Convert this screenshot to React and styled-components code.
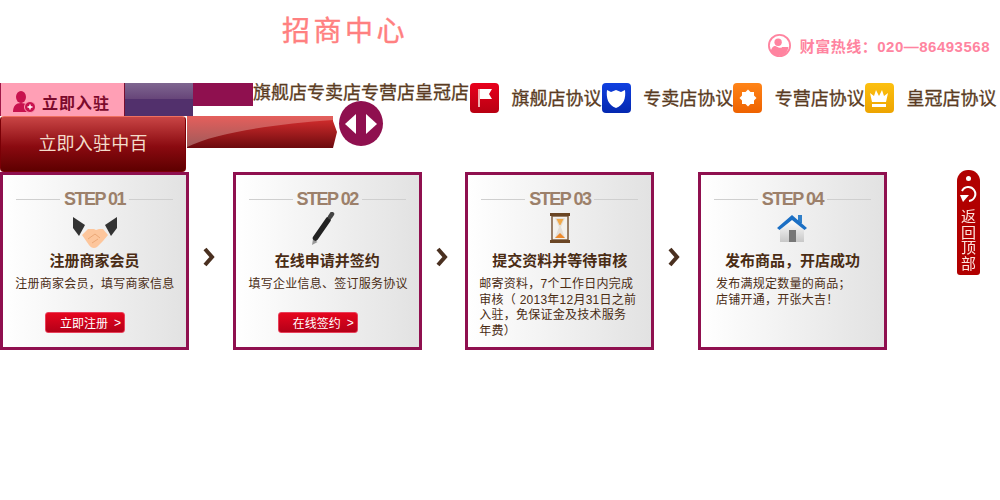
import React from "react";
import styled, { createGlobalStyle } from "styled-components";

const Global = createGlobalStyle`
  html, body { margin: 0; padding: 0; background: #fff; }
  body { font-family: "Liberation Sans", "Noto Sans CJK SC", sans-serif; }
`;

const Page = styled.div`
  width: 1000px;
  height: 500px;
  overflow: hidden;
`;

// header
const Header = styled.header`
  display: flex;
  height: 83px;
`;
const Title = styled.h1`
  margin: 12px 0 0 282px;
  font-size: 28px;
  line-height: 40px;
  height: 40px;
  font-weight: 400;
  letter-spacing: 3.5px;
  -webkit-text-stroke: 0.4px #ff8080;
  color: #ff8080;
`;
const Hotline = styled.div`
  display: flex;
  align-items: center;
  gap: 9px;
  height: 26px;
  margin: 32px 10px 0 auto;
  font-size: 15px;
  font-weight: 700;
  letter-spacing: 0.5px;
  color: #ff84a0;
`;

// tab row
const TabRow = styled.nav`
  display: flex;
  height: 33px;
`;
const JoinTab = styled.div`
  box-sizing: border-box;
  width: 125px;
  height: 33px;
  display: flex;
  align-items: center;
  gap: 7px;
  padding: 5px 0 0 12px;
  background: #ff9fb5;
  border-left: 1px solid #a01848;
  border-right: 1px solid #7a1030;
  font-size: 16px;
  font-weight: 700;
  letter-spacing: 1px;
  color: #7c0a2c;
`;
const PurpleTab = styled.div`
  width: 68px;
  height: 33px;
  background: linear-gradient(#7f6690 0, #664478 50%, #52306c 50%, #52306c 100%);
`;
const MagentaTab = styled.div`
  width: 60px;
  height: 23px;
  background: #8f104f;
`;
const TabNames = styled.div`
  width: 217px;
  font-size: 18px;
  line-height: 20px;
  white-space: nowrap;
  -webkit-text-stroke: 0.3px #5a3b22;
  color: #5a3b22;
`;
const Agreement = styled.a`
  width: 131.67px;
  display: flex;
  font-size: 18px;
  line-height: 30px;
  white-space: nowrap;
  -webkit-text-stroke: 0.3px #5a3b22;
  color: #5a3b22;
`;
const AgreementLabel = styled.span`
  margin: 1px 0 0 12.500px;
`;
const Badge = styled.span`
  box-sizing: border-box;
  width: 29px;
  height: 30px;
  flex: none;
  display: flex;
  align-items: center;
  justify-content: center;
  border-radius: 4px;
  background: ${(props) => props.$bg};
`;

// join row
const JoinRow = styled.div`
  display: flex;
  height: 56px;
`;
const JoinButton = styled.button`
  box-sizing: border-box;
  width: 186px;
  height: 56px;
  padding: 0 0 4px;
  border: 1px solid #7a0006;
  border-top-color: #f07060;
  border-radius: 4px;
  background: linear-gradient(#c94545, #8a0a10 55%, #5e0000);
  font-family: inherit;
  font-size: 18px;
  letter-spacing: 0.2px;
  color: #f3dccb;
`;
const RibbonArt = styled.svg`
  display: block;
  margin-left: 1px;
  flex: none;
`;
const Round = styled.div`
  width: 44px;
  height: 45px;
  margin: -15px 0 0 1px;
  flex: none;
  border-radius: 50%;
  background: #8f104f;
  display: flex;
  align-items: center;
  justify-content: center;
  gap: 10px;
`;
const Tri = styled.span`
  width: 0;
  height: 0;
  border-top: 10px solid transparent;
  border-bottom: 10px solid transparent;
  border-${(props) => (props.$left ? "right" : "left")}: 11px solid #fff;
`;

// steps
const Steps = styled.section`
  display: grid;
  grid-template-columns: repeat(4, 232.67px);
`;
const StepCell = styled.div`
  display: flex;
  align-items: center;
`;
const Card = styled.article`
  box-sizing: border-box;
  width: 189px;
  height: 178px;
  flex: none;
  display: flex;
  flex-direction: column;
  padding: 14px 13px 0;
  border: 3px solid #8f104f;
  background: linear-gradient(90deg, #fff, #e2e2e2);
  color: #4a2c14;
`;
const StepHead = styled.div`
  display: flex;
  flex: none;
  align-items: center;
  gap: 4px;
  height: 20px;
  font-size: 18px;
  font-weight: 700;
  letter-spacing: -1.5px;
  color: #9c806a;
  white-space: nowrap;
  &::before, &::after {
    content: "";
    flex: 1;
    height: 1px;
    margin-top: 1px;
    background: #cfcfcf;
  }
`;
const IconSlot = styled.div`
  box-sizing: border-box;
  flex: none;
  height: 42px;
  padding: ${(props) => props.$top}px ${(props) => props.$shift || 0}px 0 0;
  display: flex;
  justify-content: center;
`;
const StepTitle = styled.h3`
  flex: none;
  margin: 0;
  font-size: 15px;
  line-height: 20px;
  text-align: center;
  white-space: nowrap;
`;
const StepText = styled.p`
  flex: none;
  margin: 6px -4px 0 ${(props) => props.$indent}px;
  font-size: 12px;
  line-height: 15.5px;
  letter-spacing: 0.25px;
  white-space: nowrap;
  text-align: ${(props) => (props.$center ? "center" : "left")};
`;
const StepLink = styled.a`
  box-sizing: border-box;
  flex: none;
  width: 80px;
  height: 21px;
  margin: auto 0 14px 29px;
  padding-left: 14px;
  display: flex;
  align-items: center;
  gap: 6px;
  border: 1px solid #e8405a;
  border-radius: 3px;
  background: linear-gradient(#e6061e, #b40018);
  font-size: 12px;
  color: #fff;
`;
const NextArrow = styled.svg`
  margin: 0 0 8px 13px;
  flex: none;
`;

// back to top floats over the page
const BackTop = styled.a`
  position: fixed;
  left: 957px;
  top: 170px;
  width: 23px;
  height: 105px;
  box-sizing: border-box;
  padding-top: 6px;
  border-radius: 11px 11px 3px 3px;
  background: #b10000;
  display: flex;
  flex-direction: column;
  align-items: center;
  font-size: 15px;
  line-height: 15.7px;
  color: #fde3dc;
  text-align: center;
`;
const BackDot = styled.span`
  width: 5px;
  height: 5px;
  flex: none;
  border-radius: 50%;
  background: #fff;
`;
const BackIconWrap = styled.svg`
  margin: 4px 0 6px;
  flex: none;
`;

const PersonAdd = () => (
  <svg width="22" height="22" viewBox="0 0 22 22">
    <ellipse cx="8" cy="6" rx="5" ry="6" fill="#c8124e" />
    <path d="M0 21c0-6 3-9 8-9s8 3 8 9z" fill="#c8124e" />
    <circle cx="17" cy="16" r="5.5" fill="#c8124e" stroke="#ff9fb5" strokeWidth="1" />
    <path d="M14.5 16h5M17 13.5v5" stroke="#fff" strokeWidth="1.4" />
  </svg>
);

const HotlineIcon = () => (
  <svg width="23" height="25" viewBox="0 0 25 25">
    <circle cx="12.5" cy="12.5" r="11.5" fill="#fff" stroke="#ff84a0" strokeWidth="2" />
    <circle cx="11" cy="9" r="4" fill="#ff84a0" />
    <path d="M3 20c0-5 3-7 5-7l4 2 3 0 0-1 7 0c0 5-4 9-9.500 9.500-4 0-7-1-9.500-3.500z" fill="#ff84a0" />
  </svg>
);

const FlagIcon = () => (
  <svg width="20" height="22" viewBox="0 0 20 22">
    <path d="M4 2v18" stroke="#f0b0b0" strokeWidth="2" />
    <path d="M5 2h12l-3 5 3 5H5z" fill="#fff" />
  </svg>
);
const ShieldIcon = () => (
  <svg width="22" height="22" viewBox="0 0 22 22">
    <path d="M2 3l4 2 5-2 5 2 4-2c1 8-1 15-9 18C3 18 1 11 2 3z" fill="#fff" />
  </svg>
);
const GearIcon = () => (
  <svg width="22" height="22" viewBox="0 0 22 22">
    <rect x="5" y="5" width="12" height="12" fill="#fff" />
    <rect x="5" y="5" width="12" height="12" fill="#fff" transform="rotate(45 11 11)" />
  </svg>
);
const CrownIcon = () => (
  <svg width="20" height="22" viewBox="0 0 20 22">
    <path d="M3 15L1 6l4 3 2-6 3 6 3-6 2 6 4-3-2 9z" fill="#fff" />
    <rect x="3" y="17" width="14" height="3" fill="#fff" />
  </svg>
);

const Ribbon = () => (
  <RibbonArt width="151" height="32" viewBox="0 0 151 32">
    <defs>
      <linearGradient id="ribLight" x1="0" y1="0" x2="0" y2="1">
        <stop offset="0" stopColor="#e55f5c" />
        <stop offset="1" stopColor="#a05a5a" />
      </linearGradient>
      <linearGradient id="ribDark" x1="0" y1="0" x2="0" y2="1">
        <stop offset="0" stopColor="#dc3030" />
        <stop offset="1" stopColor="#6c0a0e" />
      </linearGradient>
    </defs>
    <path d="M0 0h146v5l4 11-4 16H0z" fill="url(#ribDark)" />
    <path d="M0 0h146v4C90 8 30 16 0 31z" fill="url(#ribLight)" />
  </RibbonArt>
);

const Handshake = () => (
  <svg width="44" height="32" viewBox="0 0 44 32">
    <path d="M0 0l12 8-6 11-6-8z" fill="#333" />
    <path d="M44 0L32 8l6 11 6-8z" fill="#333" />
    <path d="M9 18l6-6h6l2 1 3-1h4l5 6-5 6-6 6c-3 2-6 1-8-2z" fill="#fdc69c" />
    <path d="M15 22l7-5 5 4M19 26l6-4" stroke="#eba877" strokeWidth="1" fill="none" />
  </svg>
);
const Pen = () => (
  <svg width="24" height="34" viewBox="0 0 24 34">
    <path d="M1 33l1-6 4.500 3z" fill="#999" />
    <path d="M4.500 26L17 8" stroke="#222" strokeWidth="5.500" strokeLinecap="round" />
    <path d="M19 5l2-3" stroke="#444" strokeWidth="4.500" strokeLinecap="round" />
  </svg>
);
const Hourglass = () => (
  <svg width="20" height="30" viewBox="0 0 20 30">
    <rect x="2" y="3" width="16" height="24" fill="#f4f1ec" stroke="#7b5a3c" strokeWidth="1.500" />
    <rect x="0" y="0" width="20" height="3" fill="#6a4524" />
    <rect x="0" y="27" width="20" height="3" fill="#6a4524" />
    <path d="M5 5h10l-4 9 4 11H5l4-11z" fill="#e4ded6" />
    <path d="M6.500 6h7l-3 6h-1z" fill="#f2a948" />
    <path d="M5 25l5-5 5 5z" fill="#ee8a2c" />
  </svg>
);
const House = () => (
  <svg width="30" height="27" viewBox="0 0 30 27">
    <defs>
      <linearGradient id="wall" x1="0" y1="0" x2="0" y2="1">
        <stop offset="0" stopColor="#fff" />
        <stop offset="1" stopColor="#c8c8c8" />
      </linearGradient>
    </defs>
    <path d="M3 15L15 5l12 10v12H3z" fill="url(#wall)" />
    <rect x="12" y="15" width="7" height="12" fill="#777" />
    <path d="M21 0h4v8h-4z" fill="#2f7fc9" />
    <path d="M0 13L15 0l15 13-2.500 2L15 5 2.500 15z" fill="#1b6fc4" />
  </svg>
);

const BackIcon = () => (
  <BackIconWrap width="17" height="18" viewBox="0 0 17 18">
    <path d="M2 6A7 7 0 1 1 9 16" fill="none" stroke="#fff" strokeWidth="2" />
    <path d="M0 10h9l-6 7z" fill="#fff" />
  </BackIconWrap>
);

const agreements = [
  { label: "旗舰店协议", bg: "linear-gradient(#e8001c, #b80012)", icon: <FlagIcon /> },
  { label: "专卖店协议", bg: "linear-gradient(#1040e0, #0428b0)", icon: <ShieldIcon /> },
  { label: "专营店协议", bg: "linear-gradient(#ff8418, #ee6200)", icon: <GearIcon /> },
  { label: "皇冠店协议", bg: "linear-gradient(#fcc010, #eda400)", icon: <CrownIcon /> },
];

const steps = [
  {
    no: "01",
    icon: <Handshake />,
    iconTop: 8,
    title: "注册商家会员",
    lines: ["注册商家会员，填写商家信息"],
    center: true,
    indent: -3,
    link: "立即注册",
  },
  {
    no: "02",
    icon: <Pen />,
    iconTop: 3,
    iconShift: 8,
    title: "在线申请并签约",
    lines: ["填写企业信息、签订服务协议"],
    center: true,
    indent: -2,
    link: "在线签约",
  },
  {
    no: "03",
    icon: <Hourglass />,
    iconTop: 4,
    title: "提交资料并等待审核",
    lines: ["邮寄资料，7个工作日内完成", "审核（ 2013年12月31日之前", "入驻，免保证金及技术服务", "年费）"],
    indent: -2,
  },
  {
    no: "04",
    icon: <House />,
    iconTop: 6,
    title: "发布商品，开店成功",
    lines: ["发布满规定数量的商品；", "店铺开通，开张大吉！"],
    indent: 2,
  },
];

function App() {
  return (
    <Page>
      <Global />
      <Header>
        <Title>招商中心</Title>
        <Hotline>
          <HotlineIcon />
          财富热线：020—86493568
        </Hotline>
      </Header>

      <TabRow>
        <JoinTab>
          <PersonAdd />
          立即入驻
        </JoinTab>
        <PurpleTab />
        <MagentaTab />
        <TabNames>旗舰店专卖店专营店皇冠店</TabNames>
        {agreements.map((item) => (
          <Agreement key={item.label}>
            <Badge $bg={item.bg}>{item.icon}</Badge>
            <AgreementLabel>{item.label}</AgreementLabel>
          </Agreement>
        ))}
      </TabRow>

      <JoinRow>
        <JoinButton>立即入驻中百</JoinButton>
        <Ribbon />
        <Round>
          <Tri $left />
          <Tri />
        </Round>
      </JoinRow>

      <Steps>
        {steps.map((step, i) => (
          <StepCell key={step.no}>
            <Card>
              <StepHead>STEP {step.no}</StepHead>
              <IconSlot $top={step.iconTop} $shift={step.iconShift}>{step.icon}</IconSlot>
              <StepTitle>{step.title}</StepTitle>
              <StepText $center={step.center} $indent={step.indent}>
                {step.lines.map((line) => (
                  <React.Fragment key={line}>
                    {line}
                    <br />
                  </React.Fragment>
                ))}
              </StepText>
              {step.link && (
                <StepLink>
                  {step.link}
                  <span>&gt;</span>
                </StepLink>
              )}
            </Card>
            {i < 3 && (
              <NextArrow width="14" height="20" viewBox="0 0 14 20">
                <path d="M3 2l7 8-7 8" fill="none" stroke="#4a3020" strokeWidth="4" />
              </NextArrow>
            )}
          </StepCell>
        ))}
      </Steps>

      <BackTop>
        <BackDot />
        <BackIcon />
        返<br />回<br />顶<br />部
      </BackTop>
    </Page>
  );
}

export default App;
